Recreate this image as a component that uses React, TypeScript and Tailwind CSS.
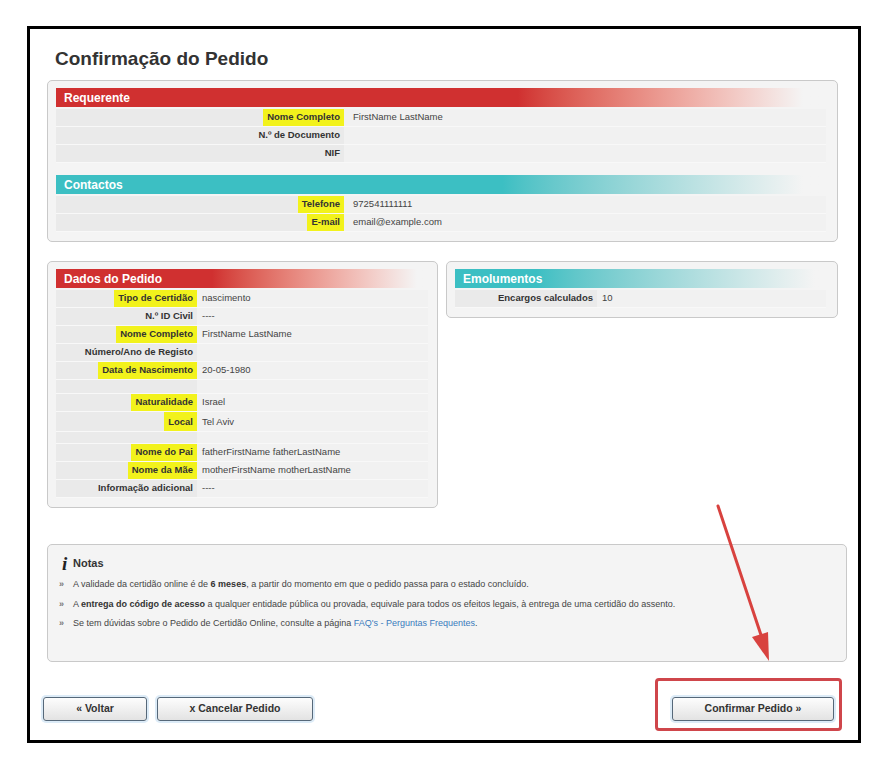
import React from 'react';

type Row = {
  label?: string;
  value?: string;
  hl?: boolean;
  h?: string;
  top?: boolean;
};

const requerente: Row[] = [
  { label: 'Nome Completo', value: 'FirstName LastName', hl: true },
  { label: 'N.º de Documento' },
  { label: 'NIF' },
];

const contactos: Row[] = [
  { label: 'Telefone', value: '972541111111', hl: true },
  { label: 'E-mail', value: 'email@example.com', hl: true },
];

const dadosPedido: Row[] = [
  { label: 'Tipo de Certidão', value: 'nascimento', hl: true },
  { label: 'N.º ID Civil', value: '----' },
  { label: 'Nome Completo', value: 'FirstName LastName', hl: true },
  { label: 'Número/Ano de Registo' },
  { label: 'Data de Nascimento', value: '20-05-1980', hl: true },
  { h: 'h-[14px]' },
  { label: 'Naturalidade', value: 'Israel', hl: true },
  { label: 'Local', value: 'Tel Aviv', hl: true, h: 'h-[20px]', top: true },
  { h: 'h-[12px]' },
  { label: 'Nome do Pai', value: 'fatherFirstName fatherLastName', hl: true },
  { label: 'Nome da Mãe', value: 'motherFirstName motherLastName', hl: true },
  { label: 'Informação adicional', value: '----' },
];

const RowList = ({ rows, labelW, valuePad }: { rows: Row[]; labelW: string; valuePad: string }) => {
  return (
    <div className="mt-[2px]">
      {rows.map((row, i) => (
        <div key={i} className={`flex ${row.h ?? 'h-[18px]'} border-b border-[#f8f8f8]`}>
          <div className={`${labelW} flex shrink-0 justify-end bg-[#eaeaea]`}>
            {row.label && (
              <span
                className={`flex h-full px-[4px] font-bold text-[#333] ${row.top ? 'items-start pt-[3px]' : 'items-center'} ${row.hl ? 'bg-[#f2f21c]' : ''}`}
              >
                {row.label}
              </span>
            )}
          </div>
          <div className={`flex flex-1 bg-[#f1f1f1] ${valuePad} text-[#444] ${row.top ? 'items-start pt-[3px]' : 'items-center'}`}>
            {row.value}
          </div>
        </div>
      ))}
    </div>
  );
};

const Header = ({ title, tone }: { title: string; tone: string }) => (
  <div className={`flex h-[19px] items-center pl-[8px] text-[12px] font-bold text-white ${tone}`}>{title}</div>
);

const Btn = ({ children, w }: { children: React.ReactNode; w: string }) => (
  <button
    className={`${w} h-[24px] rounded-[3px] border border-[#566879] bg-linear-to-b from-[#fdfdfd] to-[#e3e3e3] text-[10.5px] font-bold text-[#333] shadow-[0_0_0_2px_#dcebf7]`}
  >
    {children}
  </button>
);

const App = () => {
  return (
    <div className="relative h-[761px] w-[888px] bg-white pl-[27px] pt-[26px] font-['Liberation_Sans',Arial,sans-serif] text-[9.5px]">
      <div className="h-[717px] w-[834px] border-[3px] border-black">
        <h1 className="ml-[25px] mt-[19px] h-[22px] text-[19px] leading-[22px] font-bold text-[#333]">
          Confirmação do Pedido
        </h1>

        {/* requerente + contactos */}
        <div className="ml-[17px] mt-[10px] w-[791px] rounded-[5px] border border-[#c9c9c9] bg-[#f4f4f4] pb-[9px] pl-[8px] pr-[11px] pt-[7px]">
          <Header title="Requerente" tone="bg-linear-to-r from-[#d03030] from-60% to-[#f4f4f4] to-97%" />
          <RowList rows={requerente} labelW="w-[288px]" valuePad="pl-[9px]" />
          <div className="mt-[12px]">
            <Header title="Contactos" tone="bg-linear-to-r from-[#3cbfc3] from-58% to-[#f4f4f4] to-97%" />
          </div>
          <RowList rows={contactos} labelW="w-[288px]" valuePad="pl-[9px]" />
        </div>

        <div className="ml-[17px] mt-[19px] flex w-[791px] items-start gap-[8px]">
          <div className="w-[391px] rounded-[5px] border border-[#c9c9c9] bg-[#f4f4f4] pb-[9px] pl-[8px] pr-[9px] pt-[7px]">
            <Header title="Dados do Pedido" tone="bg-linear-to-r from-[#d03030] from-42% to-[#f4f4f4] to-97%" />
            <RowList rows={dadosPedido} labelW="w-[141px]" valuePad="pl-[5px]" />
          </div>
          <div className="w-[392px] rounded-[5px] border border-[#c9c9c9] bg-[#f4f4f4] pb-[9px] pl-[8px] pr-[11px] pt-[7px]">
            <Header title="Emolumentos" tone="bg-linear-to-r from-[#3cbfc3] from-22% to-[#f4f4f4] to-97%" />
            <RowList rows={[{ label: 'Encargos calculados', value: '10' }]} labelW="w-[142px]" valuePad="pl-[5px]" />
          </div>
        </div>

        {/* notas */}
        <div className="ml-[17px] mt-[36px] h-[118px] w-[800px] rounded-[5px] border border-[#c9c9c9] bg-[#f4f4f4] pl-[11px] pt-[8px] text-[9px] text-[#444]">
          <div className="flex h-[20px] items-center">
            <span className="w-[14px] pl-[3px] font-['Liberation_Serif',serif] text-[19px] font-bold italic leading-none text-[#222]">
              i
            </span>
            <span className="text-[11px] font-bold text-[#333]">Notas</span>
          </div>
          <ul className="mt-[2px]">
            <li className="flex h-[19.5px] items-center">
              <span className="w-[14px] text-[9px] font-bold text-[#777]">»</span>
              <span>
                A validade da certidão online é de <b className="text-[#333]">6 meses</b>, a partir do momento em que o pedido
                passa para o estado concluído.
              </span>
            </li>
            <li className="flex h-[19.5px] items-center">
              <span className="w-[14px] text-[9px] font-bold text-[#777]">»</span>
              <span>
                A <b className="text-[#333]">entrega do código de acesso</b> a qualquer entidade pública ou provada, equivale
                para todos os efeitos legais, à entrega de uma certidão do assento.
              </span>
            </li>
            <li className="flex h-[19.5px] items-center">
              <span className="w-[14px] text-[9px] font-bold text-[#777]">»</span>
              <span>
                Se tem dúvidas sobre o Pedido de Certidão Online, consulte a página{' '}
                <a className="text-[#3a7bbd]">FAQ's - Perguntas Frequentes</a>.
              </span>
            </li>
          </ul>
        </div>

        <div className="mt-[35px] flex pl-[13px] pr-[24px]">
          <Btn w="w-[104px]">« Voltar</Btn>
          <div className="ml-[10px]">
            <Btn w="w-[156px]">x Cancelar Pedido</Btn>
          </div>
          <div className="ml-auto">
            <Btn w="w-[162px]">Confirmar Pedido »</Btn>
          </div>
        </div>
      </div>

      {/* annotation: red frame + arrow */}
      <div className="pointer-events-none absolute left-[655px] top-[678px] h-[53px] w-[187px] rounded-[4px] border-[3px] border-[#cf464b]" />
      <svg className="pointer-events-none absolute left-0 top-0" width="888" height="761">
        <line x1="718" y1="506" x2="762" y2="638" stroke="#d8423f" strokeWidth="3" strokeLinecap="round" />
        <polygon points="769,661 752,637 768,632" fill="#d8423f" />
      </svg>
    </div>
  );
};

export default App;
